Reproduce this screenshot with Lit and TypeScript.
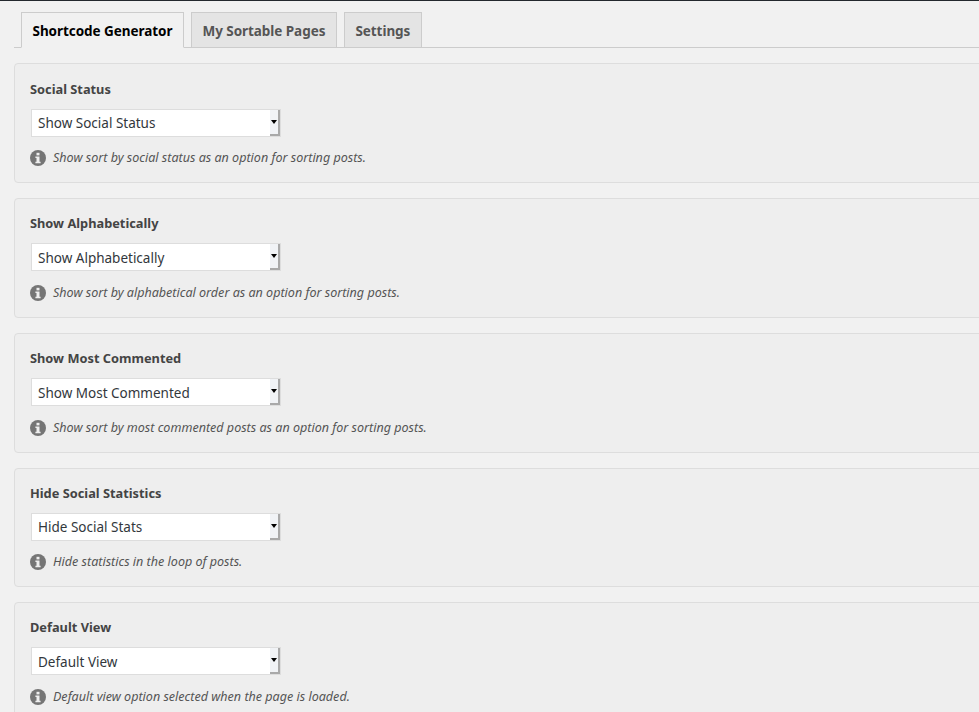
import { LitElement, html, css, svg } from "lit";
import { customElement } from "lit/decorators.js";

const tabs = ["Shortcode Generator", "My Sortable Pages", "Settings"];
const cards = [
  { title: "Social Status", value: "Show Social Status", help: "Show sort by social status as an option for sorting posts." },
  { title: "Show Alphabetically", value: "Show Alphabetically", help: "Show sort by alphabetical order as an option for sorting posts." },
  { title: "Show Most Commented", value: "Show Most Commented", help: "Show sort by most commented posts as an option for sorting posts." },
  { title: "Hide Social Statistics", value: "Hide Social Stats", help: "Hide statistics in the loop of posts." },
  { title: "Default View", value: "Default View", help: "Default view option selected when the page is loaded." },
];

const info = svg`<svg class="info" width="16" height="16" viewBox="0 0 16 16"><circle cx="8" cy="8" r="8" fill="#757575"/><rect x="6.5" y="2.8" width="3" height="2.6" fill="#eee"/><path d="M5.4 6.5h4.1v5.2h1.1v1.6H5.4v-1.6h1.1V8.1H5.4z" fill="#eee"/></svg>`;

@customElement("app-root")
export class AppRoot extends LitElement {
  static styles = css`
    :host {
      display: block;
      width: 979px;
      height: 712px;
      overflow: hidden;
      background: #f1f1f1;
      font-family: "Noto Sans", "Open Sans", sans-serif;
      color: #444;
      box-sizing: border-box;
      border-top: 1px solid #23282d;
    }
    .tabs {
      display: flex;
      gap: 7px;
      margin: 11px 0 15.45px 14px;
      padding-left: 7px;
      height: 36px;
      box-sizing: border-box;
      border-bottom: 1px solid #ccc;
    }
    .tab {
      height: 36px;
      box-sizing: border-box;
      border: 1px solid #ccc;
      background: #e4e4e4;
      color: #555;
      font-weight: 700;
      font-size: 13.5px;
      line-height: 36px;
      padding: 0 10.5px;
      white-space: nowrap;
      letter-spacing: -0.05px;
    }
    .tab.active {
      background: #f1f1f1;
      color: #000;
      border-bottom-color: #f1f1f1;
    }
    .cards {
      display: flex;
      flex-direction: column;
      gap: 15px;
      margin-left: 14px;
      margin-right: -10px;
    }
    .card {
      background: #eee;
      border: 1px solid #ddd;
      border-radius: 4px;
      padding: 15px 15px 0;
      height: 119.7px;
      box-sizing: border-box;
      flex: none;
    }
    .title {
      font-size: 12.8px;
      font-weight: 700;
      color: #444;
      line-height: 18px;
      padding-top: 0.25px;
      margin: 0 0 10.85px;
    }
    .select {
      display: flex;
      width: 250px;
      height: 28px;
      margin-left: 1px;
      box-sizing: border-box;
      border: 1px solid #ddd;
      background: #fff;
    }
    .value {
      flex: 1;
      font-size: 13.5px;
      line-height: 26px;
      padding-left: 6px;
      padding-top: 0.85px;
      box-sizing: border-box;
      color: #32373c;
      white-space: nowrap;
    }
    .arrow {
      width: 10px;
      flex: none;
      box-sizing: border-box;
      background: #f1f3f6;
      border-right: 2px solid #a9a9a9;
      border-bottom: 2px solid #a9a9a9;
      display: flex;
      align-items: center;
      justify-content: center;
    }
    .arrow i {
      display: block;
      width: 0;
      height: 0;
      border-left: 3.5px solid transparent;
      border-right: 3.5px solid transparent;
      border-top: 4px solid #000;
    }
    .help {
      display: flex;
      align-items: flex-start;
      gap: 7px;
      margin-top: 13.65px;
      font-size: 12.55px;
      font-style: italic;
      color: #555;
      line-height: 16px;
      white-space: nowrap;
    }
    .info { flex: none; }
  `;

  render() {
    return html`
      <div class="tabs">
        ${tabs.map((t, i) => html`<div class="tab ${i === 0 ? "active" : ""}">${t}</div>`)}
      </div>
      <div class="cards">
        ${cards.map(
          (c) => html`
            <section class="card">
              <div class="title">${c.title}</div>
              <div class="select">
                <div class="value">${c.value}</div>
                <div class="arrow"><i></i></div>
              </div>
              <div class="help">${info}<span>${c.help}</span></div>
            </section>
          `
        )}
      </div>
    `;
  }
}
